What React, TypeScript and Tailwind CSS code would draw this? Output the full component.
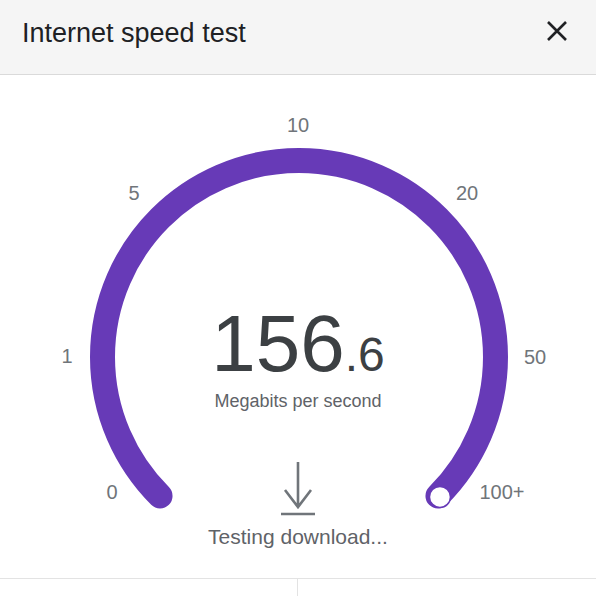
import React from "react";

const labels = [
  { text: "0", x: 112, y: 417 },
  { text: "1", x: 67, y: 281 },
  { text: "5", x: 134, y: 118 },
  { text: "10", x: 298, y: 50 },
  { text: "20", x: 467, y: 118 },
  { text: "50", x: 535, y: 282 },
  { text: "100+", x: 502, y: 417 },
];

function Gauge() {
  // center of the dial inside the body box
  const cx = 299;
  const cy = 282;
  const r = 196.5;
  const d = r * Math.SQRT1_2;
  return (
    <svg className="absolute inset-0 h-full w-full" viewBox="0 0 596 503">
      <path
        d={`M ${cx - d} ${cy + d} A ${r} ${r} 0 1 1 ${cx + d} ${cy + d}`}
        fill="none"
        stroke="#673ab7"
        strokeWidth={25}
        strokeLinecap="round"
      />
      <circle cx={cx + d + 2} cy={cy + d + 1} r={10.5} fill="#fff" stroke="#673ab7" strokeWidth={1.5} />
      {labels.map((l) => (
        <text
          key={l.text}
          x={l.x}
          y={l.y}
          textAnchor="middle"
          dominantBaseline="central"
          fill="#70757a"
          fontSize={20}
          fontFamily="'Liberation Sans', Arial, sans-serif"
        >
          {l.text}
        </text>
      ))}
    </svg>
  );
}

export default function App() {
  return (
    <div className="h-[596px] w-[596px] overflow-hidden bg-white font-['Liberation_Sans',Arial,sans-serif]">
      {/* Header */}
      <header className="flex h-[75px] items-start justify-between border-b border-[#dadada] bg-[#f5f5f5] pl-[22px] pr-[28px] pt-[17px]">
        <h1 className="text-[27px] leading-[32px] text-[#202124]">Internet speed test</h1>
        <button className="mt-[3px] text-[#202124]">
          <svg width="22" height="22" viewBox="0 0 22 22">
            <path d="M2 2 L20 20 M20 2 L2 20" stroke="currentColor" strokeWidth="2.6" />
          </svg>
        </button>
      </header>

      {/* Dial */}
      <div className="relative h-[503px]">
        <Gauge />
        <div className="relative flex flex-col items-center pt-[229px]">
          <div className="flex items-baseline leading-none text-[#3c4043]">
            <span className="text-[80px]">156</span>
            <span className="text-[48px]">.6</span>
          </div>
          <div className="mt-[6px] text-[18px] leading-[22px] text-[#5f6368]">Megabits per second</div>
          <svg className="mt-[48px] text-[#70757a]" width="36" height="56" viewBox="0 0 36 56">
            <path d="M18 2 V47 M5 30 L18 47 L31 30 M1 54 H35" fill="none" stroke="currentColor" strokeWidth="2.6" />
          </svg>
          <div className="mt-[8px] text-[21px] leading-[26px] text-[#5f6368]">Testing download...</div>
        </div>
      </div>

      {/* Footer */}
      <div className="grid h-[18px] grid-cols-2 border-t border-[#e3e3e3]">
        <div className="border-r border-[#e3e3e3]" />
        <div />
      </div>
    </div>
  );
}
